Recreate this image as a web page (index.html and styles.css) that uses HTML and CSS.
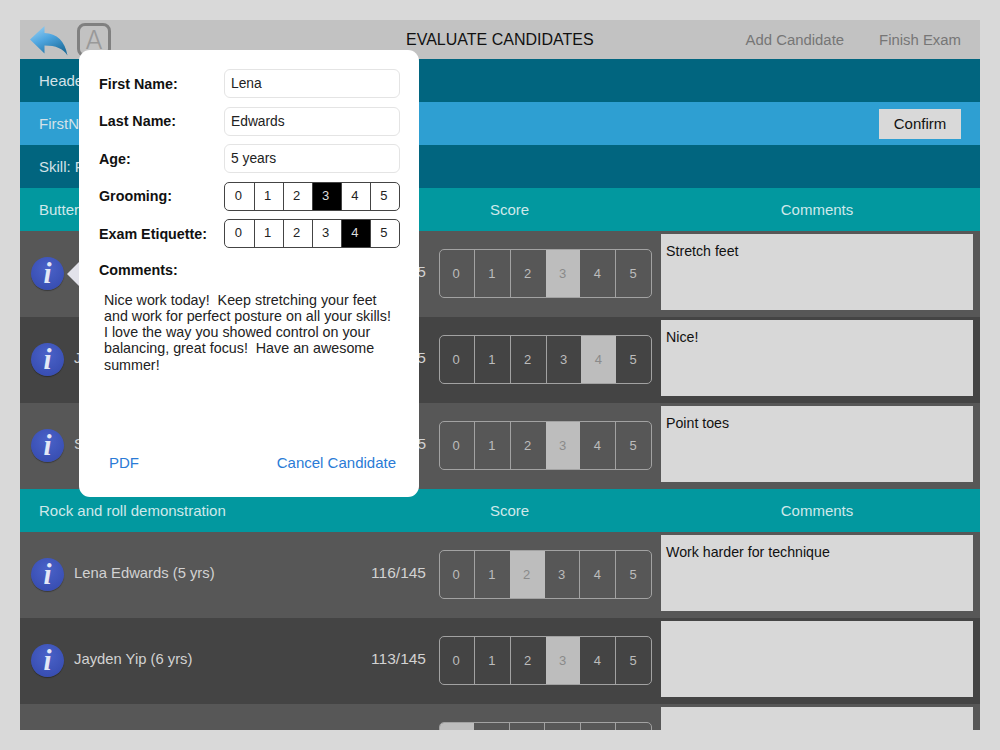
FILE: index.html
```html
<!DOCTYPE html>
<html lang="en">
<head>
    <meta charset="UTF-8">
    <meta name="viewport" content="width=device-width, initial-scale=1.0">
    <title>Evaluate Candidates</title>
    <link rel="stylesheet" href="styles.css">
</head>
<body>
    <div class="app">
        <div class="topbar">
            <svg class="back-icon" width="38" height="31" viewBox="0 0 38 31">
                <defs>
                    <linearGradient id="backFill" x1="0" y1="0" x2="0.6" y2="1">
                        <stop offset="0" stop-color="#a4d6f4"/>
                        <stop offset="0.5" stop-color="#4fa6e0"/>
                        <stop offset="1" stop-color="#20709f"/>
                    </linearGradient>
                </defs>
                <path d="M0 14.5 L14.5 1 L14.5 8 C27 8.5 35 16 37.5 30.5 C33 23.5 26 20.5 14.5 20.5 L14.5 28.5 Z" fill="url(#backFill)"/>
            </svg>
            <div class="letter-btn">A</div>
            <div class="title">EVALUATE CANDIDATES</div>
            <div class="top-actions">
                <span>Add Candidate</span>
                <span>Finish Exam</span>
            </div>
        </div>

        <div class="band band-dark">Heade</div>
        <div class="band band-blue">
            <span>FirstN</span>
            <button class="confirm">Confirm</button>
        </div>
        <div class="band band-dark">Skill: F</div>

        <div class="section-head">
            <span>Butter</span>
            <span class="center">Score</span>
            <span class="center">Comments</span>
        </div>

        <div class="row">
            <div class="info"><i>i</i></div>
            <div class="name"></div>
            <div class="total">116/145</div>
            <div class="seg">
                <span>0</span><span>1</span><span>2</span><span class="on">3</span><span>4</span><span>5</span>
            </div>
            <div class="comment">Stretch feet</div>
        </div>
        <div class="row alt">
            <div class="info"><i>i</i></div>
            <div class="name">J</div>
            <div class="total">113/145</div>
            <div class="seg">
                <span>0</span><span>1</span><span>2</span><span>3</span><span class="on">4</span><span>5</span>
            </div>
            <div class="comment">Nice!</div>
        </div>
        <div class="row">
            <div class="info"><i>i</i></div>
            <div class="name">S</div>
            <div class="total">/145</div>
            <div class="seg">
                <span>0</span><span>1</span><span>2</span><span class="on">3</span><span>4</span><span>5</span>
            </div>
            <div class="comment">Point toes</div>
        </div>

        <div class="section-head">
            <span>Rock and roll demonstration</span>
            <span class="center">Score</span>
            <span class="center">Comments</span>
        </div>

        <div class="row">
            <div class="info"><i>i</i></div>
            <div class="name">Lena Edwards (5 yrs)</div>
            <div class="total">116/145</div>
            <div class="seg">
                <span>0</span><span>1</span><span class="on">2</span><span>3</span><span>4</span><span>5</span>
            </div>
            <div class="comment">Work harder for technique</div>
        </div>
        <div class="row alt">
            <div class="info"><i>i</i></div>
            <div class="name">Jayden Yip (6 yrs)</div>
            <div class="total">113/145</div>
            <div class="seg">
                <span>0</span><span>1</span><span>2</span><span class="on">3</span><span>4</span><span>5</span>
            </div>
            <div class="comment"></div>
        </div>
        <div class="row">
            <div class="info"></div>
            <div class="name"></div>
            <div class="total"></div>
            <div class="seg">
                <span class="on"></span><span></span><span></span><span></span><span></span><span></span>
            </div>
            <div class="comment"></div>
        </div>

        <div class="popover">
            <div class="pointer"></div>
            <div class="form-row">
                <label>First Name:</label>
                <div class="field">Lena</div>
            </div>
            <div class="form-row">
                <label>Last Name:</label>
                <div class="field">Edwards</div>
            </div>
            <div class="form-row">
                <label>Age:</label>
                <div class="field">5 years</div>
            </div>
            <div class="form-row">
                <label>Grooming:</label>
                <div class="pop-seg">
                    <span>0</span><span>1</span><span>2</span><span class="on">3</span><span>4</span><span>5</span>
                </div>
            </div>
            <div class="form-row">
                <label>Exam Etiquette:</label>
                <div class="pop-seg">
                    <span>0</span><span>1</span><span>2</span><span>3</span><span class="on">4</span><span>5</span>
                </div>
            </div>
            <label class="comments-label">Comments:</label>
            <p class="comments-text">Nice work today!&nbsp; Keep stretching your feet<br>and work for perfect posture on all your skills!<br>I love the way you showed control on your<br>balancing, great focus!&nbsp; Have an awesome<br>summer!</p>
            <div class="pop-footer">
                <span>PDF</span>
                <span>Cancel Candidate</span>
            </div>
        </div>
    </div>
</body>
</html>
```

FILE: styles.css
```css
html, body {
    margin: 0;
    padding: 0;
}
body {
    font-family: "Liberation Sans", Arial, sans-serif;
    background: #d9d9d9;
    height: 750px;
    overflow: hidden;
}
.app {
    position: relative;
    width: 960px;
    height: 710px;
    margin: 20px;
    overflow: hidden;
    background: #575757;
}
.topbar {
    position: relative;
    display: flex;
    align-items: center;
    height: 39px;
    padding: 0 19px 0 10px;
    box-sizing: border-box;
    background: #c2c2c2;
}
.back-icon {
    margin-top: 2px;
}
.letter-btn {
    width: 34px;
    height: 34px;
    margin: 1px 0 0 9px;
    box-sizing: border-box;
    border: 3px solid #808080;
    border-radius: 8px;
    color: #999;
    font-family: Inter, "Liberation Sans", sans-serif;
    font-size: 26px;
    font-weight: 300;
    line-height: 28px;
    text-align: center;
}
.title {
    position: absolute;
    left: 386px;
    top: 10px;
    font-size: 16px;
    line-height: 19px;
    color: #111;
}
.top-actions {
    display: flex;
    gap: 35px;
    margin-left: auto;
    font-size: 14.9px;
    color: #767676;
}
.band {
    display: flex;
    align-items: center;
    justify-content: space-between;
    height: 43px;
    padding: 0 19px;
    box-sizing: border-box;
    font-size: 15px;
    color: #d4e2e8;
}
.band-dark {
    background: #01657f;
}
.band-blue {
    background: #2e9fd2;
}
.confirm {
    width: 82px;
    height: 30px;
    padding: 0;
    border: none;
    background: #d9d9d9;
    color: #111;
    font-family: inherit;
    font-size: 15px;
}
.section-head {
    display: grid;
    grid-template-columns: 1fr 285px 312px;
    column-gap: 9px;
    align-items: center;
    height: 43px;
    padding: 0 7px 0 19px;
    box-sizing: border-box;
    background: #02989f;
    color: #cfe8ea;
    font-size: 15px;
}
.center {
    text-align: center;
}
.row {
    display: flex;
    align-items: center;
    height: 86px;
    padding: 0 7px 4px 11px;
    box-sizing: border-box;
    background: #575757;
    color: #d2d2d2;
    font-size: 14.8px;
}
.row.alt {
    background: #444444;
}
.info {
    flex: none;
    width: 33px;
    height: 33px;
    margin: 3px 10px 0 0;
    border-radius: 50%;
    background: radial-gradient(circle at 50% 35%, #4a62c8, #3348ac);
    box-shadow: 0 1px 1px rgba(0, 0, 0, 0.35);
    color: #e4e8f6;
    font-family: "Liberation Serif", serif;
    font-size: 29px;
    font-weight: bold;
    line-height: 33px;
    text-align: center;
}
.name {
    flex: 1;
}
.total {
    margin-right: 13px;
    font-size: 15.5px;
}
.seg {
    display: flex;
    flex: none;
    width: 213px;
    height: 49px;
    margin: 3px 9px 0 0;
    box-sizing: border-box;
    border: 1px solid #a2a2a2;
    border-radius: 5px;
    overflow: hidden;
}
.seg span {
    flex: 1 1 0;
    box-sizing: border-box;
    padding-right: 1px;
    border-left: 1px solid #a2a2a2;
    color: #bcbcbc;
    font-size: 13px;
    line-height: 47px;
    text-align: center;
}
.seg span:first-child {
    flex: 0 0 34px;
    padding-right: 2px;
    border-left: none;
}
.seg .on {
    border-left: none;
    background: #bdbdbd;
    color: #8a8a8a;
}
.seg .on + span {
    border-left: none;
}
.comment {
    flex: none;
    width: 312px;
    height: 76px;
    padding: 9px 5px;
    box-sizing: border-box;
    background: #d8d8d8;
    color: #111;
    font-size: 14.2px;
    line-height: 17px;
}
.popover {
    position: absolute;
    left: 59px;
    top: 30px;
    display: flex;
    flex-direction: column;
    width: 340px;
    height: 447px;
    padding: 19px 19px 0 20px;
    box-sizing: border-box;
    background: #fff;
    border-radius: 11px;
}
.pointer {
    position: absolute;
    left: -12px;
    top: 212px;
    border-style: solid;
    border-width: 12px 12px 12px 0;
    border-color: transparent #e2e2ea transparent transparent;
}
.form-row {
    display: grid;
    grid-template-columns: 125px 176px;
    align-items: center;
    height: 29px;
    margin-bottom: 8.5px;
}
.popover label {
    color: #111;
    font-size: 14.3px;
    font-weight: bold;
}
.field {
    height: 29px;
    padding-left: 6px;
    box-sizing: border-box;
    border: 1px solid #e4e4e4;
    border-radius: 6px;
    color: #222;
    font-size: 13.8px;
    line-height: 28px;
}
.pop-seg {
    display: flex;
    height: 29px;
    box-sizing: border-box;
    border: 1px solid #444;
    border-radius: 5px;
    overflow: hidden;
}
.pop-seg span {
    flex: 1 1 0;
    box-sizing: border-box;
    padding-right: 2px;
    border-left: 1px solid #444;
    color: #222;
    font-size: 13px;
    line-height: 26px;
    text-align: center;
}
.pop-seg span:first-child {
    flex: 0 0 28.5px;
    border-left: none;
}
.pop-seg .on {
    background: #000;
    color: #ddd;
}
.comments-label {
    margin-top: 5px;
    line-height: 17px;
}
.comments-text {
    margin: 13px 0 0 5px;
    color: #222;
    font-size: 14.3px;
    line-height: 16.3px;
    white-space: nowrap;
}
.pop-footer {
    display: flex;
    justify-content: space-between;
    margin: auto 4px 25px 10px;
    color: #2a7bd6;
    font-size: 15px;
    line-height: 18px;
}
```
